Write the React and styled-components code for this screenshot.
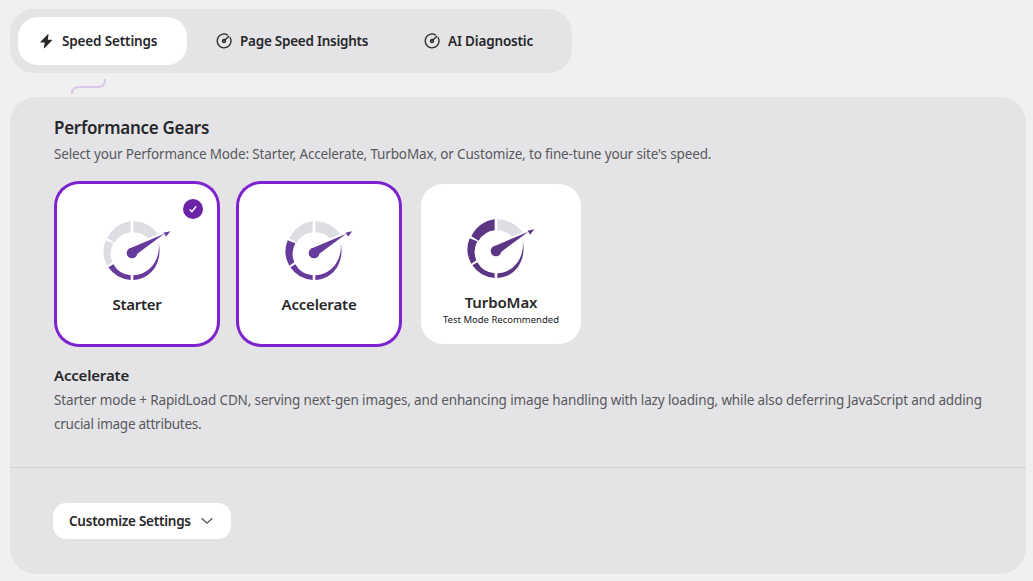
import React from "react";
import styled, { createGlobalStyle } from "styled-components";

const Global = createGlobalStyle`
  * { box-sizing: border-box; }
  body { margin: 0; background: #f0f0f0; overflow: hidden; }
  h2, h3, p { margin: 0; }
  button { border: 0; font: inherit; color: inherit; text-align: left; }
`;

const Page = styled.main`
  height: 581px;
  padding: 9px 7px 7px 10px;
  display: flex;
  flex-direction: column;
  align-items: flex-start;
  color: #27272a;
  font-family: "Noto Sans", "Open Sans", sans-serif;
`;

const TabBar = styled.nav`
  display: flex;
  gap: 8px;
  width: 562px;
  height: 64px;
  padding: 8px;
  border-radius: 24px;
  background: #e4e4e6;
`;

const Tab = styled.button`
  display: flex;
  align-items: center;
  gap: 8px;
  width: ${(p) => p.$width}px;
  height: 48px;
  padding: 0 0 0 ${(p) => p.$indent}px;
  border-radius: 20px;
  background: ${(p) => (p.$active ? "#fff" : "transparent")};
  box-shadow: ${(p) => (p.$active ? "none" : "inset -1px 0 0 #e1e1e3")};
  font-size: 13.5px;
  font-weight: 600;
  white-space: nowrap;
  svg { flex: none; }
`;

const Label = styled.span`
  letter-spacing: ${(p) => p.$track || 0}px;
  white-space: nowrap;
`;

const Connector = styled.div`
  height: 24px;
  padding: 6px 0 0 60px;
  svg { display: block; }
`;

const Panel = styled.section`
  align-self: stretch;
  height: 477px;
  border-radius: 26px;
  background: #e4e4e6;
`;

const Gears = styled.div`
  height: 371px;
  padding: 18px 30px 0 44px;
  border-bottom: 1px solid #d2d2d5;
`;

const Title = styled.h2`
  font-size: 17px;
  line-height: 26px;
  font-weight: 600;
`;

const Copy = styled.p`
  padding-top: ${(p) => (p.$lead ? 1 : 0)}px;
  color: #58585d;
  font-size: 13.5px;
  line-height: 24px;
  white-space: nowrap;
`;

const Cards = styled.div`
  display: flex;
  gap: 22px;
  padding: 18px 3px 0;
`;

const Card = styled.article`
  position: relative;
  display: flex;
  flex-direction: column;
  align-items: center;
  width: 160px;
  height: 160px;
  padding-top: ${(p) => (p.$note ? 35 : 37)}px;
  border-radius: 22px;
  background: #fff;
  box-shadow: ${(p) => (p.$ring ? "0 0 0 3px #7e22ce" : "none")};
`;

const CardName = styled.h3`
  margin-top: 12px;
  font-size: 15px;
  line-height: 22px;
  font-weight: 600;
`;

const Note = styled.span`
  margin-top: 1px;
  font-size: 9.5px;
  line-height: 12px;
  color: #18181b;
`;

const Badge = styled.span`
  position: absolute;
  top: 15px;
  right: 14px;
  width: 20px;
  height: 20px;
  display: grid;
  place-items: center;
  border-radius: 50%;
  background: #6b21a8;
`;

const GaugeSvg = styled.svg`
  display: block;
`;

const Summary = styled.div`
  padding-top: 19px;
`;

const SummaryTitle = styled.h3`
  font-size: 15px;
  line-height: 24px;
  font-weight: 600;
  margin-bottom: 1px;
`;

const Footer = styled.div`
  padding: 35px 43px;
`;

const Customize = styled.button`
  display: flex;
  align-items: center;
  justify-content: space-between;
  width: 178px;
  height: 36px;
  padding: 0 18px 0 16px;
  border-radius: 13px;
  background: #fff;
  font-size: 13.5px;
  font-weight: 600;
`;

function Bolt() {
  return (
    <svg width="16" height="16" viewBox="0 0 16 16">
      <path d="M9.8 1.2 2.4 8.9c-.3.3-.1.7.3.7h4L5.900 14.800c-.1.5.3.7.6.4l7.400-7.800c.3-.3.1-.7-.3-.7H9.800l.7-5.100c.1-.5-.4-.8-.7-.4Z" fill="#27272a" />
    </svg>
  );
}

function Dial() {
  return (
    <svg width="16" height="16" viewBox="0 0 16 16" fill="none" stroke="#27272a" strokeWidth="1.3" strokeLinecap="round">
      <path d="M11.300 1.800A6.900 6.900 0 1 0 14.200 4.700" />
      <circle cx="8" cy="8" r="1.500" fill="#27272a" fillOpacity=".55" />
      <path d="m9.200 6.800 3.600-3.600" />
    </svg>
  );
}

const SEGMENTS = [
  "M16 139 31 130A65 65 0 0 0 83 163V177A88 88 0 0 1 16 139Z",
  "M8 58 31 67A66 66 0 0 0 28 124L13 134A87 87 0 0 1 8 58Z",
  "M83 1V34A65 65 0 0 0 35 65L13 52A88 88 0 0 1 83 1Z",
  "M91 1A88 88 0 0 1 166 40L135 52A66 66 0 0 0 91 34Z",
];

function Gauge({ level, color }) {
  return (
    <GaugeSvg width="68" height="60" viewBox="0 0 204 180">
      {SEGMENTS.map((d, i) => (
        <path key={i} d={d} fill={i < level ? color : "#dddee4"} />
      ))}
      <path d="M167 65C179 121 148 174 91 177V163C139 161 173 118 167 65Z" fill={color} />
      <path d="M78 83 184 38 102 99Z" fill={color} />
      <path d="m181 35 21-4-13 16-3-6Z" fill={color} />
      <circle cx="87" cy="96" r="16" fill={color} />
    </GaugeSvg>
  );
}

const TABS = [
  { text: "Speed Settings", width: 169, indent: 20, Icon: Bolt, active: true, track: -0.15 },
  { text: "Page Speed Insights", width: 201, indent: 21, Icon: Dial, track: -0.25 },
  { text: "AI Diagnostic", width: 160, indent: 20, Icon: Dial, track: -0.17 },
];

const MODES = [
  { name: "Starter", level: 1, color: "#663b9b", ring: true, checked: true, track: -0.28 },
  { name: "Accelerate", level: 2, color: "#663b9b", ring: true, track: -0.18 },
  { name: "TurboMax", level: 3, color: "#5b3685", note: "Test Mode Recommended", track: -0.12 },
];

export default function App() {
  return (
    <Page>
      <Global />
      <TabBar>
        {TABS.map(({ text, width, indent, Icon, active, track }) => (
          <Tab key={text} $width={width} $indent={indent} $active={active}>
            <Icon />
            <Label $track={track}>{text}</Label>
          </Tab>
        ))}
      </TabBar>
      <Connector>
        <svg width="38" height="16" viewBox="0 0 38 16" fill="none" stroke="#d9c8ea" strokeWidth="2">
          <path d="M2 15C2 10 4 8 9 8H27C33 8 35 6 35 0" />
        </svg>
      </Connector>
      <Panel>
        <Gears>
          <Title><Label $track={-0.29}>Performance Gears</Label></Title>
          <Copy $lead>
            <Label $track={-0.15}>Select your Performance Mode: Starter, Accelerate, TurboMax, or Customize, to fine-tune your site's speed.</Label>
          </Copy>
          <Cards>
            {MODES.map((m) => (
              <Card key={m.name} $ring={m.ring} $note={!!m.note}>
                {m.checked && (
                  <Badge>
                    <svg width="10" height="10" viewBox="0 0 10 10" fill="none" stroke="#fff" strokeWidth="1.400">
                      <path d="m1.700 5.500 2.200 2.100L8.200 2.200" />
                    </svg>
                  </Badge>
                )}
                <Gauge level={m.level} color={m.color} />
                <CardName><Label $track={m.track}>{m.name}</Label></CardName>
                {m.note && <Note><Label>{m.note}</Label></Note>}
              </Card>
            ))}
          </Cards>
          <Summary>
            <SummaryTitle><Label $track={-0.18}>Accelerate</Label></SummaryTitle>
            <Copy>
              <Label $track={-0.145}>Starter mode + RapidLoad CDN, serving next-gen images, and enhancing image handling with lazy loading, while also deferring JavaScript and adding</Label>
              <br />
              <Label $track={-0.25}>crucial image attributes.</Label>
            </Copy>
          </Summary>
        </Gears>
        <Footer>
          <Customize>
            <Label $track={-0.25}>Customize Settings</Label>
            <svg width="12" height="8" viewBox="0 0 12 8" fill="none" stroke="#52525b" strokeWidth="1.300">
              <path d="m.6 1.200 5.400 5 5.400-5" />
            </svg>
          </Customize>
        </Footer>
      </Panel>
    </Page>
  );
}
